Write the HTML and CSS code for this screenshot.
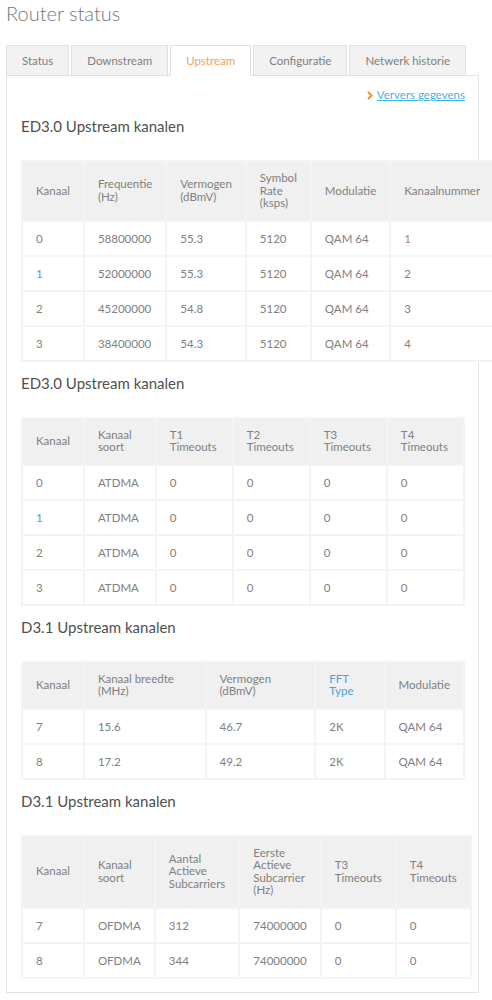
FILE: index.html
```html
<!DOCTYPE html>
<html lang="nl">
  <head>
    <meta charset="UTF-8" />
    <meta name="viewport" content="width=device-width, initial-scale=1.0" />
    <title>Router status</title>
    <link rel="stylesheet" href="styles.css">
  </head>
  <body>
    <h1 class="page-title">Router status</h1>
    <ul class="tabs">
      <li class="tab">Status</li>
      <li class="tab">Downstream</li>
      <li class="tab active">Upstream</li>
      <li class="tab">Configuratie</li>
      <li class="tab">Netwerk historie</li>
    </ul>
    <div class="panel">
      <div class="refresh">
        <svg class="chevron" width="6" height="9" viewBox="0 0 6 9"><polyline points="1,1 4.5,4.5 1,8" fill="none" stroke="#f39321" stroke-width="2" /></svg>
        <a href="#">Ververs gegevens</a>
      </div>

      <h2>ED3.0 Upstream kanalen</h2>
      <table class="data">
        <tr>
          <th>Kanaal</th><th>Frequentie (Hz)</th><th>Vermogen (dBmV)</th><th>Symbol Rate (ksps)</th><th>Modulatie</th><th>Kanaalnummer</th>
        </tr>
        <tr><td>0</td><td>58800000</td><td>55.3</td><td>5120</td><td>QAM 64</td><td class="warm">1</td></tr>
        <tr><td class="cool">1</td><td>52000000</td><td>55.3</td><td>5120</td><td>QAM 64</td><td>2</td></tr>
        <tr><td>2</td><td>45200000</td><td>54.8</td><td>5120</td><td>QAM 64</td><td>3</td></tr>
        <tr><td>3</td><td>38400000</td><td>54.3</td><td>5120</td><td>QAM 64</td><td>4</td></tr>
      </table>

      <h2>ED3.0 Upstream kanalen</h2>
      <table class="data">
        <tr>
          <th>Kanaal</th><th>Kanaal soort</th><th>T1 Timeouts</th><th>T2 Timeouts</th><th>T3 Timeouts</th><th>T4 Timeouts</th>
        </tr>
        <tr><td>0</td><td>ATDMA</td><td>0</td><td>0</td><td>0</td><td>0</td></tr>
        <tr><td class="cool">1</td><td>ATDMA</td><td>0</td><td>0</td><td>0</td><td>0</td></tr>
        <tr><td>2</td><td>ATDMA</td><td>0</td><td>0</td><td>0</td><td>0</td></tr>
        <tr><td>3</td><td>ATDMA</td><td>0</td><td>0</td><td>0</td><td>0</td></tr>
      </table>

      <h2>D3.1 Upstream kanalen</h2>
      <table class="data">
        <tr>
          <th>Kanaal</th><th>Kanaal breedte (MHz)</th><th>Vermogen (dBmV)</th><th class="cool">FFT Type</th><th>Modulatie</th>
        </tr>
        <tr><td>7</td><td>15.6</td><td>46.7</td><td>2K</td><td>QAM 64</td></tr>
        <tr><td>8</td><td>17.2</td><td>49.2</td><td>2K</td><td>QAM 64</td></tr>
      </table>

      <h2>D3.1 Upstream kanalen</h2>
      <table class="data">
        <tr>
          <th>Kanaal</th><th>Kanaal soort</th><th>Aantal Actieve Subcarriers</th><th>Eerste Actieve Subcarrier (Hz)</th><th>T3 Timeouts</th><th>T4 Timeouts</th>
        </tr>
        <tr><td>7</td><td>OFDMA</td><td>312</td><td>74000000</td><td>0</td><td>0</td></tr>
        <tr><td>8</td><td>OFDMA</td><td>344</td><td>74000000</td><td>0</td><td>0</td></tr>
      </table>
    </div>
  </body>
</html>
```

FILE: styles.css
```css
html {
  overflow-x: hidden;
}
body {
  margin: 0;
  padding: 1px 13px 0 6px;
  font-family: Lato, "Open Sans", sans-serif;
  color: #808080;
  background-color: #fff;
}

.page-title {
  margin: 0 0 20px;
  font-size: 20px;
  font-weight: 300;
  line-height: 24px;
  color: #777;
}

.tabs {
  display: flex;
  gap: 2px;
  list-style: none;
  margin: 0 0 -1px;
  padding: 0;
}
.tab {
  height: 29px;
  line-height: 29px;
  padding: 0 15px;
  font-size: 11.5px;
  white-space: nowrap;
  color: #808080;
  background-color: #f2f2f2;
  border: 1px solid #e0e0e0;
}
.tab.active {
  position: relative;
  color: #f5a061;
  background-color: #fff;
  border-bottom-color: #fff;
}

.panel {
  border: 1px solid #e3e3e3;
  padding: 12px 13px 13px 14px;
}

.refresh {
  display: flex;
  justify-content: flex-end;
  align-items: center;
  gap: 4px;
  padding-bottom: 3px;
  font-size: 11.5px;
  line-height: 14px;
}
.refresh a {
  color: #3fb3e6;
  text-decoration: underline;
}

h2 {
  margin: 11px 0 24px;
  font-size: 15px;
  font-weight: 400;
  line-height: 20px;
  color: #505050;
}

.data {
  width: 100%;
  border-collapse: collapse;
  font-size: 11.5px;
  line-height: 13px;
  color: #808080;
}
.data th,
.data td {
  padding: 10px 13px;
  text-align: left;
  font-weight: 400;
  border: 2px solid #f4f4f4;
  background-color: #fff;
}
.data th {
  line-height: 12.5px;
  background-color: #f0f0f0;
}
.data .cool {
  color: #4aa2d6;
}
.data .warm {
  color: #c0875a;
}
```
